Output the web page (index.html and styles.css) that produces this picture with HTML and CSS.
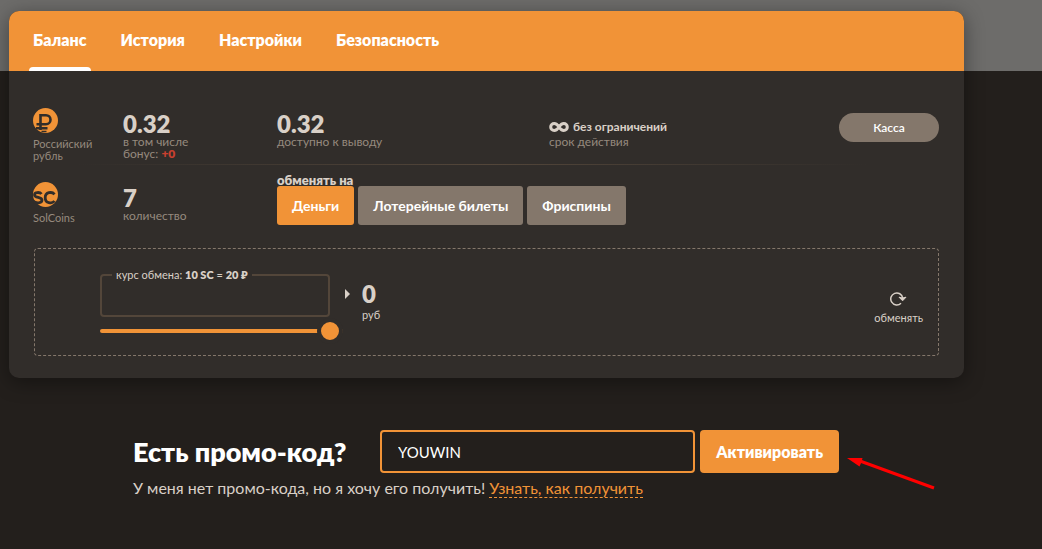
FILE: index.html
```html
<!DOCTYPE html>
<html lang="ru">
<head>
<meta charset="utf-8">
<meta name="viewport" content="width=device-width, initial-scale=1">
<title>Баланс</title>
<link rel="stylesheet" href="styles.css">
</head>
<body>
<main class="page">
  <section class="card">
    <nav class="tabs">
      <a class="tab tab-active" href="#balance">Баланс</a>
      <a class="tab" href="#history">История</a>
      <a class="tab" href="#settings">Настройки</a>
      <a class="tab" href="#security">Безопасность</a>
    </nav>
    <div class="card-body">
      <div class="row">
        <div class="currency">
          <svg class="coin" viewBox="0 0 25 25" aria-hidden="true">
            <circle cx="12.500" cy="12.500" r="12.500" fill="#f19337"/>
            <path d="M7.500 22V7.200H13a4.400 4.400 0 0 1 0 9H3.500M3 20.300H14.500" fill="none" stroke="#312d2a" stroke-width="2.600"/>
            <path d="M8.500 23.500H13.500" stroke="#312d2a" stroke-width="1.500"/>
          </svg>
          <span>Российский рубль</span>
        </div>
        <div class="stat">
          <strong class="amount">0.32</strong>
          <span>в том числе<br>бонус: <b class="bonus">+0</b></span>
        </div>
        <div class="stat">
          <strong class="amount">0.32</strong>
          <span>доступно к выводу</span>
        </div>
        <div class="stat stat-term">
          <strong class="term">
            <svg class="infinity" viewBox="0 0 20 10" aria-hidden="true"><path d="M10 5C8.500 2.500 7 1.500 5.200 1.500a3.500 3.500 0 0 0 0 7C7 8.500 8.500 7.500 10 5S13 1.500 14.800 1.500a3.500 3.500 0 0 1 0 7C13 8.500 11.500 7.500 10 5Z"/></svg>
            без ограничений
          </strong>
          <span>срок действия</span>
        </div>
        <button class="cash" type="button">Касса</button>
      </div>
      <div class="divider"></div>
      <div class="row row-coins">
        <div class="currency">
          <svg class="coin" viewBox="0 0 25 25" aria-hidden="true">
            <circle cx="12.500" cy="12.500" r="12.500" fill="#f19337"/>
            <path d="M8.500 12C7 10 1.500 9.800 1.500 12.900c0 3.300 7.500 1.800 7.500 5.200 0 3.500-6.500 3.500-9 .8M21.500 12.400C19 9.200 12.200 10 12.200 15.700S19 22.200 21.500 19" fill="none" stroke="#312d2a" stroke-width="2.800"/>
          </svg>
          <span>SolCoins</span>
        </div>
        <div class="stat">
          <strong class="amount">7</strong>
          <span>количество</span>
        </div>
        <div class="exchange-to">
          <strong class="exchange-title">обменять на</strong>
          <div class="options">
            <button class="option option-active" type="button">Деньги</button>
            <button class="option" type="button">Лотерейные билеты</button>
            <button class="option" type="button">Фриспины</button>
          </div>
        </div>
      </div>
      <form class="converter">
        <div class="source">
          <fieldset class="rate">
            <legend><label for="sum">курс обмена: <b>10 SC</b> = <b>20 ₽</b></label></legend>
            <input class="sum" id="sum" type="text">
          </fieldset>
          <input class="slider" type="range" min="0" max="7" value="7" aria-label="Сумма обмена">
        </div>
        <svg class="caret" viewBox="0 0 5 10" aria-hidden="true"><path d="M0 0 5 5 0 10Z"/></svg>
        <div class="result">
          <strong class="amount">0</strong>
          <span>руб</span>
        </div>
        <button class="swap" type="button">
          <svg class="swap-icon" viewBox="0 0 17 15" aria-hidden="true">
            <path d="M11 12.200A6 6 0 1 1 12.700 7" fill="none" stroke="#d9d0c7" stroke-width="1.500"/>
            <path d="M9 6.200 12.600 9.800 16 6.200 12.600 7Z" fill="#d9d0c7" stroke="#d9d0c7"/>
          </svg>
          <span>обменять</span>
        </button>
      </form>
    </div>
  </section>
  <section class="promo">
    <form class="promo-form">
      <label class="promo-title" for="promo">Есть промо-код?</label>
      <input class="promo-input" id="promo" type="text" value="YOUWIN">
      <div class="promo-action">
        <button class="activate" type="button">Активировать</button>
        <svg class="arrow" viewBox="0 0 90 36" aria-hidden="true">
          <path d="M13 6 87 33" stroke="#f00" stroke-width="3"/>
          <path d="M0 3 15.500 3 14.500 7 12.500 11.500Z" fill="#f00"/>
        </svg>
      </div>
    </form>
    <p class="promo-note">У меня нет промо-кода, но я хочу его получить! <a href="#promo-help">Узнать, как получить</a></p>
  </section>
</main>
</body>
</html>
```
FILE: styles.css
```css
* { box-sizing: border-box; }

body {
  margin: 0;
  min-height: 100vh;
  background: linear-gradient(#6d6c6a 71px, #231f1c 71px);
  color: #d9d0c7;
  font-family: Lato, "Noto Sans", sans-serif;
  font-size: 12px;
  line-height: 12px;
}

button, input { font: inherit; color: inherit; }

button { border: 0; cursor: pointer; }

strong, b { font-weight: 800; }

.page { padding: 11px 78px 24px 9px; }

.card {
  border-radius: 10px;
  background: #312d2a;
  box-shadow: 0 4px 20px rgba(0, 0, 0, 0.4);
}

.tabs {
  display: flex;
  gap: 26px;
  height: 60px;
  padding: 0 20px;
  border-radius: 10px 10px 0 0;
  background: #f19337;
}

.tab {
  position: relative;
  padding: 0 4px;
  color: #fff;
  font-size: 16px;
  font-weight: 800;
  line-height: 58px;
  text-decoration: none;
}

.tab-active::after {
  content: "";
  position: absolute;
  right: 0;
  bottom: 0;
  left: 0;
  height: 4px;
  border-radius: 4px 4px 0 0;
  background: #fff;
}

.card-body { padding: 36px 25px 22px 24px; }

.row {
  display: grid;
  grid-template-columns: 90px 154px 272px 1fr 100px;
  align-items: start;
}

.currency, .stat {
  display: flex;
  flex-direction: column;
  color: #968a7e;
}

.currency {
  gap: 5px;
  padding: 1px 24px 0 0;
  font-size: 11px;
}

.coin { width: 25px; height: 25px; }

.stat { padding-top: 5px; }

.amount {
  color: #d9d0c7;
  font-size: 24px;
  line-height: 24px;
}

.bonus { color: #c8402f; }

.stat-term { gap: 3px; padding-top: 14px; }

.term {
  display: flex;
  align-items: center;
  gap: 4px;
  color: #d9d0c7;
  font-weight: 700;
}

.infinity {
  width: 20px;
  height: 10px;
  fill: none;
  stroke: #d9d0c7;
  stroke-width: 3;
}

.cash {
  height: 29px;
  margin-top: 6px;
  border-radius: 15px;
  background: #84776b;
  color: #fff;
  font-weight: 600;
}

.divider {
  height: 1px;
  margin: 2px 0 9px;
  background: linear-gradient(90deg, transparent 5%, #53463a 50%, transparent 92%);
}

.row-coins .currency, .row-coins .stat { margin-top: 7px; }

.exchange-to { grid-column: 3 / -1; }

.exchange-title {
  display: block;
  font-size: 13px;
}

.options { display: flex; gap: 4px; }

.option {
  height: 39px;
  padding: 0 15px;
  border-radius: 3px;
  background: #84776b;
  color: #fff;
  font-size: 14px;
  font-weight: 700;
}

.option-active { background: #f19337; }

.converter {
  display: flex;
  align-items: flex-start;
  margin-top: 23px;
  margin-left: 1px;
  padding: 20px 15px 11px 65px;
  border: 1px dashed #84776b;
  border-radius: 4px;
  font-size: 11px;
}

.source { width: 243px; }

.rate {
  width: 230px;
  margin: 0 0 1px;
  padding: 0 10px;
  border: 2px solid #53463a;
  border-radius: 4px;
}

.rate legend { padding: 0 4px; }

.sum {
  display: block;
  width: 100%;
  height: 34px;
  padding: 0;
  border: 0;
  outline: 0;
  background: transparent;
}

.slider {
  display: block;
  width: 100%;
  height: 26px;
  margin: 0;
  appearance: none;
  background: transparent;
}

.slider::-webkit-slider-runnable-track {
  height: 4px;
  border-radius: 2px;
  background: #f19337;
}

.slider::-webkit-slider-thumb {
  width: 26px;
  height: 26px;
  margin-top: -11px;
  border: 4px solid #312d2a;
  border-radius: 50%;
  appearance: none;
  background: #f19337;
}

.caret {
  width: 5px;
  height: 10px;
  margin: 20px 12px 0 2px;
  fill: #d9d0c7;
}

.result {
  display: flex;
  flex-direction: column;
  gap: 3px;
  padding-top: 13px;
}

.swap {
  display: flex;
  flex-direction: column;
  align-items: center;
  gap: 6px;
  margin: 22px 0 0 auto;
  padding: 0;
  background: none;
}

.swap-icon { width: 17px; height: 15px; }

.promo { padding: 52px 0 0 124px; }

.promo-form {
  display: flex;
  align-items: center;
  gap: 5px;
}

.promo-title {
  width: 242px;
  color: #fff;
  font-size: 27px;
  font-weight: 800;
  line-height: 43px;
  white-space: nowrap;
}

.promo-input {
  flex: 1;
  min-width: 0;
  height: 43px;
  padding: 0 16px;
  border: 2px solid #f19337;
  border-radius: 4px;
  outline: 0;
  background: transparent;
  color: #fff;
  font-size: 15px;
}

.promo-action {
  position: relative;
  margin-right: 125px;
}

.activate {
  height: 43px;
  padding: 0 16px;
  border-radius: 4px;
  background: #f19337;
  color: #fff;
  font-size: 16px;
  font-weight: 800;
}

.arrow {
  position: absolute;
  top: 25px;
  left: calc(100% + 8px);
  width: 90px;
  height: 36px;
}

.promo-note {
  margin: 5px 0 0;
  font-size: 16px;
  line-height: 20px;
}

.promo-note a {
  border-bottom: 1px dashed #f19337;
  color: #f19337;
  text-decoration: none;
}
```
